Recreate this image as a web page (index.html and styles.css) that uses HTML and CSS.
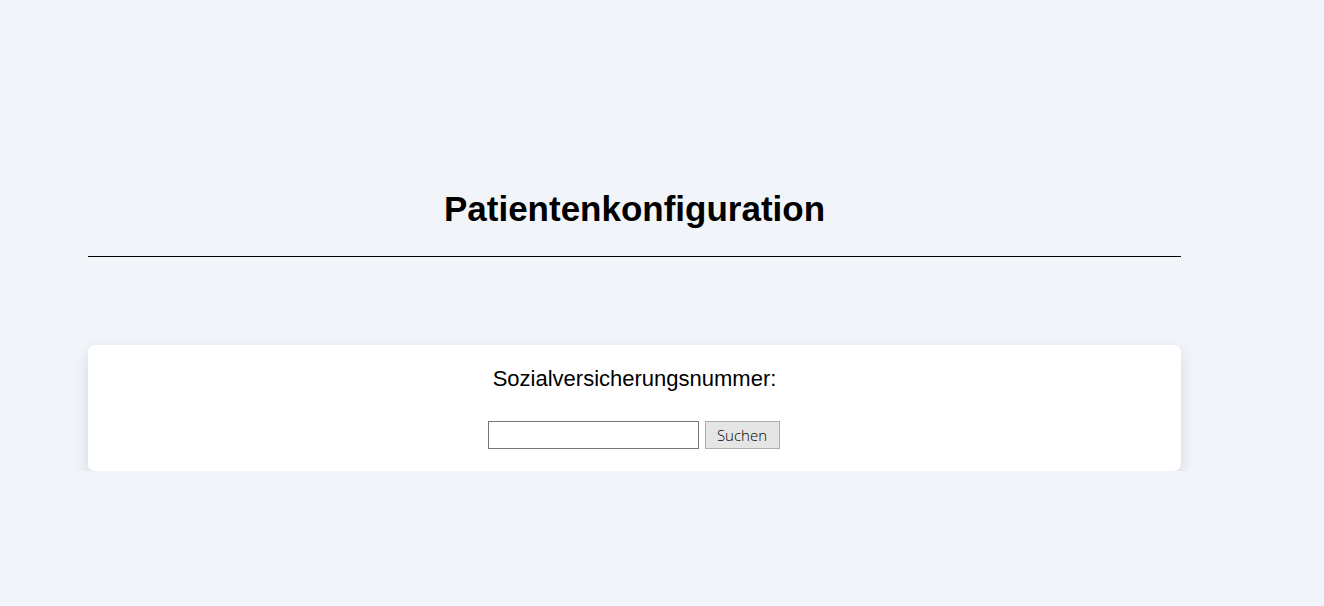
FILE: index.html
```html
<!DOCTYPE html>
<html lang="de">
<head>
<meta charset="utf-8">
<title>Patientenkonfiguration</title>
<link rel="stylesheet" href="styles.css">
</head>
<body>
<main class="page">
  <h1 class="title">Patientenkonfiguration</h1>
  <hr class="rule">
  <section class="card">
    <label class="label" for="svnr">Sozialversicherungsnummer:</label>
    <div class="search-row">
      <input class="input" id="svnr" type="text">
      <button class="button" type="button">Suchen</button>
    </div>
  </section>
</main>
</body>
</html>
```

FILE: styles.css
```css
html, body {
  margin: 0;
  padding: 0;
  background: #f1f4f8;
  font-family: "Liberation Sans", Arial, sans-serif;
  color: #000;
}
.page {
  width: 1093px;
  margin-left: 88px;
  padding-top: 189px;
  display: flex;
  flex-direction: column;
}
.title {
  margin: 0;
  font-size: 35px;
  line-height: 40px;
  font-weight: bold;
  text-align: center;
}
.rule {
  margin: 27px 0 0 0;
  border: 0;
  height: 1px;
  background: #000;
}
.card {
  margin-top: 88px;
  background: #fff;
  border-radius: 7px;
  box-shadow: 0 6px 14px rgba(30, 40, 60, 0.13);
  padding: 21px 0 22px 0;
  display: flex;
  flex-direction: column;
  align-items: center;
}
.label {
  font-size: 22px;
  line-height: 25px;
}
.search-row {
  margin-top: 30px;
  margin-right: 2px;
  display: flex;
  gap: 6px;
}
.input {
  box-sizing: border-box;
  width: 211px;
  height: 28px;
  border: 1px solid #767676;
  background: #fff;
  margin: 0;
  padding: 0 4px;
}
.button {
  box-sizing: border-box;
  width: 75px;
  height: 28px;
  margin: 0;
  background: #e5e5e5;
  border: 1px solid #adadad;
  font-family: "Open Sans", sans-serif;
  font-weight: 300;
  font-size: 15px;
  color: #000;
  padding: 0;
}
```
